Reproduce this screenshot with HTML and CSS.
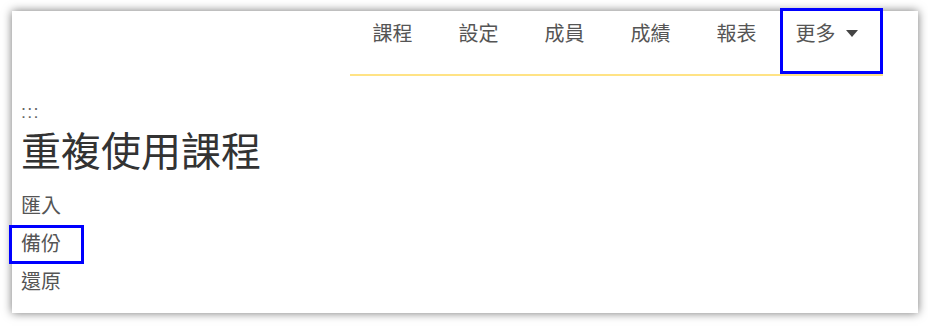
FILE: index.html
```html
<!DOCTYPE html>
<html lang="zh-Hant">
<head>
    <meta charset="UTF-8">
    <meta name="viewport" content="width=device-width, initial-scale=1.0">
    <title>重複使用課程</title>
    <link rel="stylesheet" href="styles.css">
</head>
<body>

<div class="card">
    <nav class="tabs">
        <ul>
            <li><a href="#">課程</a></li>
            <li><a href="#">設定</a></li>
            <li><a href="#">成員</a></li>
            <li><a href="#">成績</a></li>
            <li><a href="#">報表</a></li>
            <li class="more marked">
                <a href="#">更多 <svg class="caret" width="12" height="7" viewBox="0 0 12 7"><path d="M0 0 H12 L6 7 Z" fill="#444"/></svg></a>
            </li>
        </ul>
    </nav>

    <div class="content">
        <div class="skip">:::</div>
        <h1>重複使用課程</h1>
        <ul class="actions">
            <li><a href="#">匯入</a></li>
            <li class="marked"><a href="#">備份</a></li>
            <li><a href="#">還原</a></li>
        </ul>
    </div>
</div>

</body>
</html>
```

FILE: styles.css
```css
/* general */
body {
    margin: 0;
    padding: 11px 10px 13px 12px;
    background-color: #fff;
    font-family: 'Noto Sans CJK TC', 'Noto Sans', sans-serif;
    color: #555;
}

a {
    color: inherit;
    text-decoration: none;
}

ul {
    list-style: none;
    margin: 0;
    padding: 0;
}

.card {
    height: 302px;
    background-color: #fff;
    box-shadow: 0 0 9px rgba(0, 0, 0, 0.55);
    box-sizing: border-box;
}

/* top tabs */
.tabs {
    display: flex;
    justify-content: flex-end;
    padding-right: 35px;
}

.tabs ul {
    display: flex;
    border-bottom: 2px solid #ffe385;
}

.tabs li {
    position: relative;
    padding: 8px 23px 27px;
    font-size: 20px;
    line-height: 28px;
}

.tabs li.more {
    padding-left: 16px;
    padding-right: 25px;
}

.caret {
    margin-left: 6px;
    vertical-align: middle;
    position: relative;
    top: -2px;
}

/* highlight frame */
.marked::after {
    content: "";
    position: absolute;
    border: 3px solid #0000ff;
}

.tabs .marked::after {
    top: -3px;
    left: 0;
    right: 0;
    bottom: 0;
}

/* page body */
.content {
    padding: 24px 0 0 9px;
}

.skip {
    font-family: 'Liberation Sans', sans-serif;
    font-size: 18px;
    line-height: 25px;
    letter-spacing: 1.2px;
    color: #666;
}

h1 {
    margin: 0 0 13px;
    font-size: 40px;
    font-weight: normal;
    line-height: 48px;
    color: #333;
}

.actions li {
    position: relative;
    font-size: 20px;
    line-height: 38px;
}

.actions .marked::after {
    top: 1px;
    left: -12px;
    width: 69px;
    bottom: -2px;
}
```
